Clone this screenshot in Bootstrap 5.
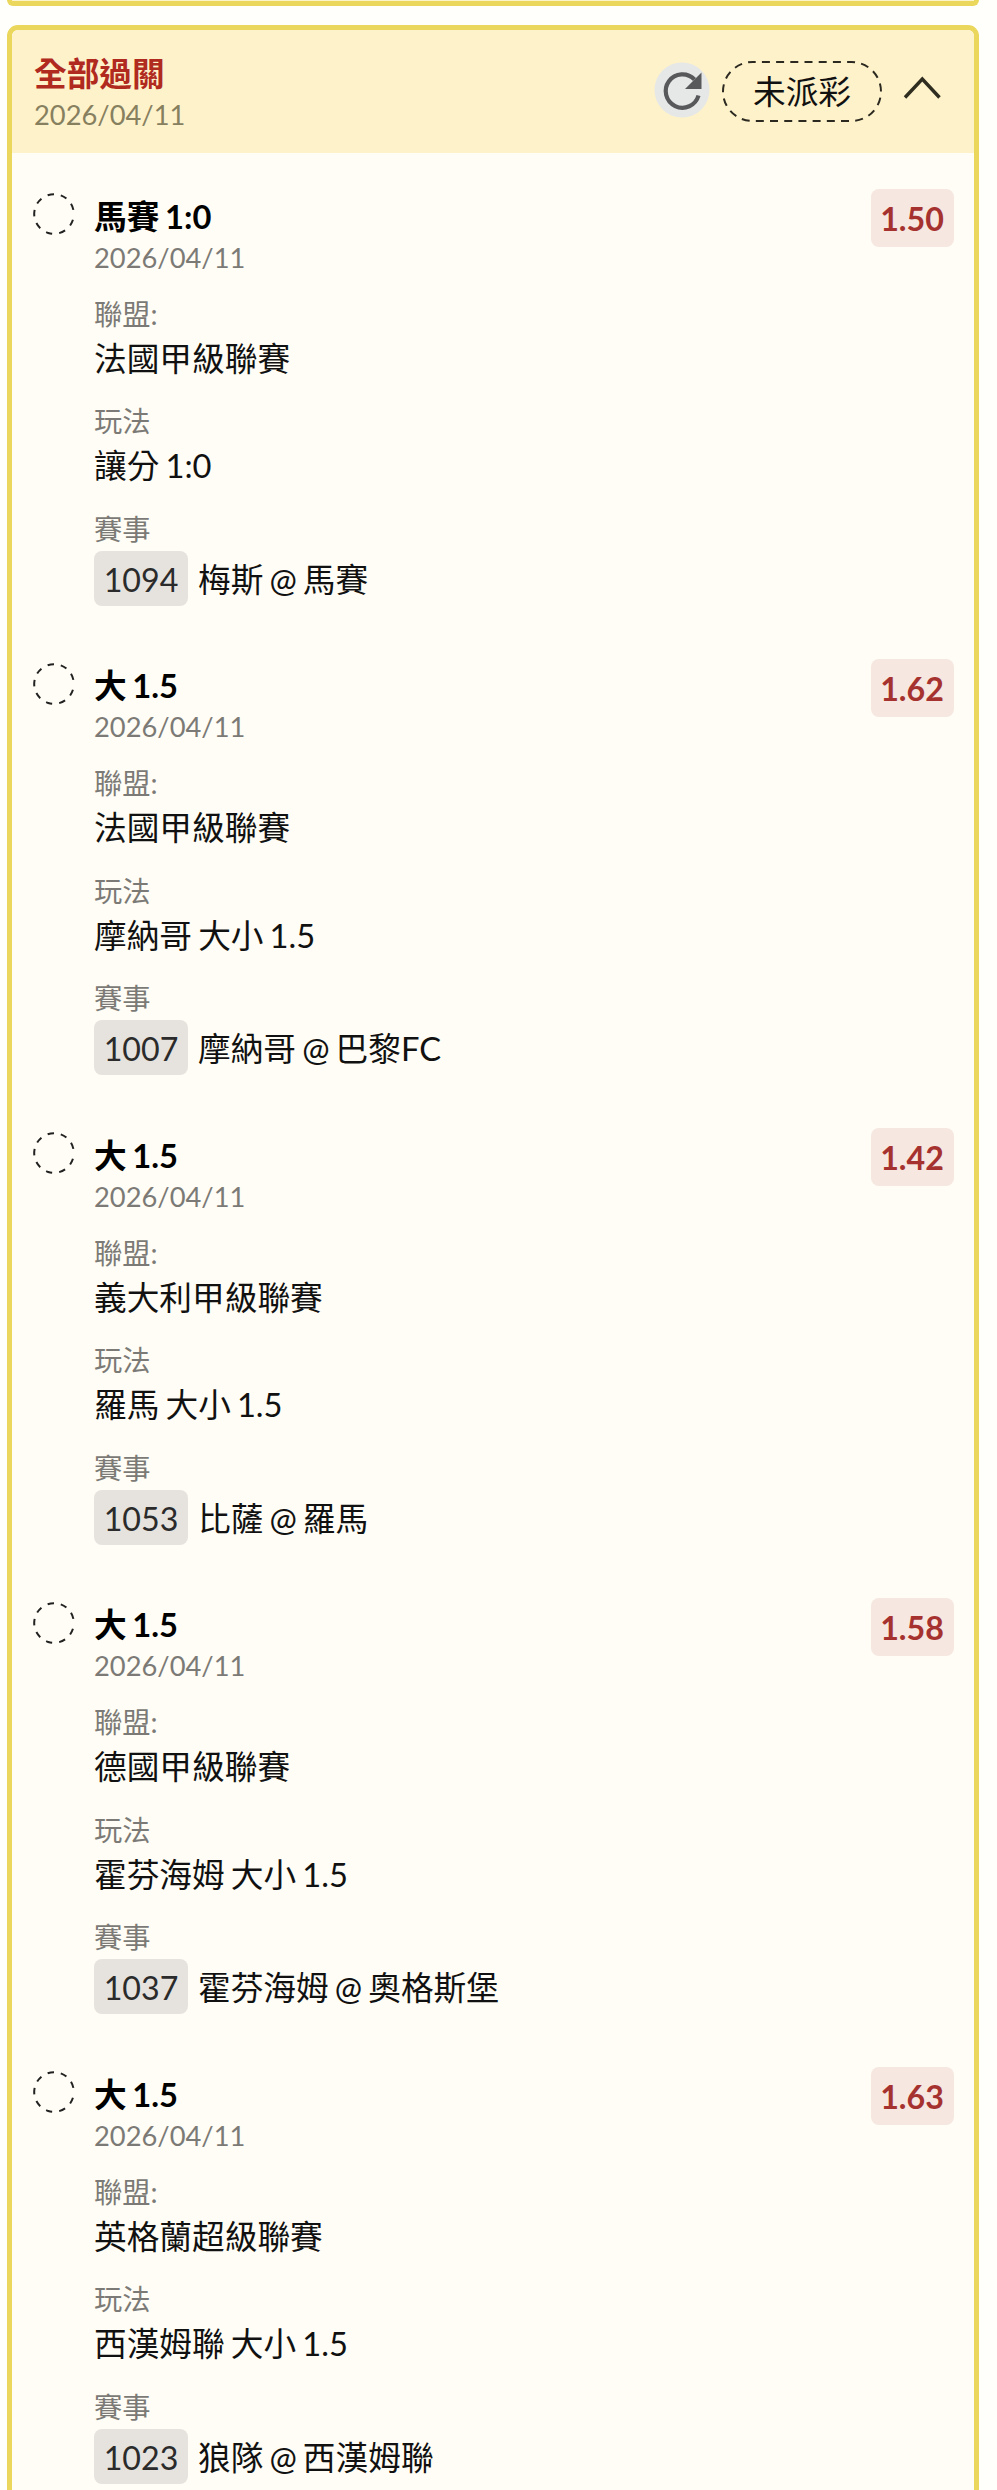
<!DOCTYPE html>
<html lang="zh-Hant">
<head>
<meta charset="utf-8">
<meta name="viewport" content="width=device-width, initial-scale=1">
<title>全部過關</title>
<link href="https://cdn.jsdelivr.net/npm/bootstrap@5.3.0/dist/css/bootstrap.min.css" rel="stylesheet">
<style>
  body { font-family: Lato, "Noto Sans CJK TC", sans-serif; font-size: 32.7px; word-spacing: -2.3px; color: #111; background: #fffffc; height: 2490px; overflow: hidden; padding: 0 18px 0 7px; }
  .slip { border: 5px solid #ead75c; border-radius: 11px; background: #fffdf5; }
  .slip-prev { height: 6px; border-top: 0; border-radius: 0 0 11px 11px; background: #fdf3c8; }
  .slip-open { margin-top: 19px; height: 2560px; }
  .slip-head { height: 123px; background: #fef2cb; border-radius: 6px 6px 0 0; padding: 0 33px 0 22px; }
  .slip-name { color: #b02a20; font-weight: 700; line-height: 44px; margin-top: 2px; }
  .muted { color: #7c7a76; font-size: 28.3px; line-height: 40px; }
  .day { line-height: 37px; font-size: 27.3px; }
  .slip-head .day { color: #87805f; }
  .bet { height: 469.5px; padding: 42.5px 20.5px 0 21px; }
  .mark-ring { width: 42px; height: 42px; margin-top: -2.5px; }
  .bet-body { margin-left: 19px; }
  .bet-body .day { margin-bottom: 18px; }
  .pick { font-weight: 700; line-height: 44px; color: #000; margin-top: -1px; }
  .val { line-height: 50px; }
  .grp { margin-bottom: 17.5px; }
  .code { width: 94px; height: 55px; border-radius: 8px; background: #e6e3df; color: #2b2b2b; font-size: 32.2px; line-height: 57px; }
  .match-row { margin-top: 2px; line-height: 57px; gap: 10px; }
  .odds { width: 83px; height: 58px; line-height: 60px; border-radius: 8px; background: #f6e7e1; color: #a5322f; font-weight: 700; font-size: 32.2px; margin-top: -6.5px; }
  .state { width: 160px; height: 62px; line-height: 61px; margin: 0 21px 0 12px; }
  .refresh { margin-bottom: 4px; }
  .chevron { margin-bottom: 7px; }
</style>
</head>
<body>
<svg class="d-none">
  <symbol id="ring" viewBox="0 0 42 42"><circle cx="21" cy="21" r="19.8" fill="none" stroke="#222" stroke-width="2" stroke-dasharray="6.4 7 6.4 7 6.4 7 6.4 7 6.4 7 6.4 7 6.4 7 6.4 7 6.4 15" transform="rotate(17 21 21)"/></symbol>
</svg>
<div class="slip slip-prev"></div>
<main class="slip slip-open">
  <header class="slip-head d-flex align-items-center">
    <div class="me-auto">
      <div class="slip-name">全部過關</div>
      <div class="muted day">2026/04/11</div>
    </div>
    <svg class="refresh" width="56" height="56" viewBox="0 0 56 56"><circle cx="28" cy="28" r="27.5" fill="#e6e8e8"/><path d="M44.5 33.5A16.7 16.7 0 1 1 40.5 17.5" fill="none" stroke="#57595b" stroke-width="4.2"/><path d="M47.5 10.5v16.5H31z" fill="#57595b"/></svg>
    <div class="state text-center position-relative">
      <svg class="position-absolute top-0 start-0" width="160" height="62"><rect x="1" y="1" width="158" height="59" rx="29.5" fill="none" stroke="#2c2a20" stroke-width="2" stroke-dasharray="8 6.2" stroke-dashoffset="4.8"/></svg>未派彩</div>
    <svg class="chevron" width="38" height="24" viewBox="0 0 38 24"><path d="M2 21.5L19.3 3L36.5 21.5" fill="none" stroke="#2f2d20" stroke-width="3.4"/></svg>
  </header>
  <div id="bets"></div>
</main>
<script>
  const bets = [
    ["馬賽 1:0", "1.50", "法國甲級聯賽", "讓分 1:0", "1094", "梅斯 @ 馬賽"],
    ["大 1.5", "1.62", "法國甲級聯賽", "摩納哥 大小 1.5", "1007", "摩納哥 @ 巴黎FC"],
    ["大 1.5", "1.42", "義大利甲級聯賽", "羅馬 大小 1.5", "1053", "比薩 @ 羅馬"],
    ["大 1.5", "1.58", "德國甲級聯賽", "霍芬海姆 大小 1.5", "1037", "霍芬海姆 @ 奧格斯堡"],
    ["大 1.5", "1.63", "英格蘭超級聯賽", "西漢姆聯 大小 1.5", "1023", "狼隊 @ 西漢姆聯"]
  ];
  document.getElementById("bets").innerHTML = bets.map(([pick, odds, league, play, code, match]) => `
    <section class="bet d-flex align-items-start">
      <svg class="mark-ring flex-shrink-0"><use href="#ring"/></svg>
      <div class="bet-body flex-grow-1">
        <div class="pick">${pick}</div>
        <div class="muted day">2026/04/11</div>
        <div class="grp"><div class="muted">聯盟:</div><div class="val">${league}</div></div>
        <div class="grp"><div class="muted">玩法</div><div class="val">${play}</div></div>
        <div class="muted">賽事</div>
        <div class="match-row d-flex"><span class="code text-center">${code}</span><span>${match}</span></div>
      </div>
      <div class="odds text-center">${odds}</div>
    </section>`).join("");
</script>
<script src="https://cdn.jsdelivr.net/npm/bootstrap@5.3.0/dist/js/bootstrap.bundle.min.js"></script>
</body>
</html>
